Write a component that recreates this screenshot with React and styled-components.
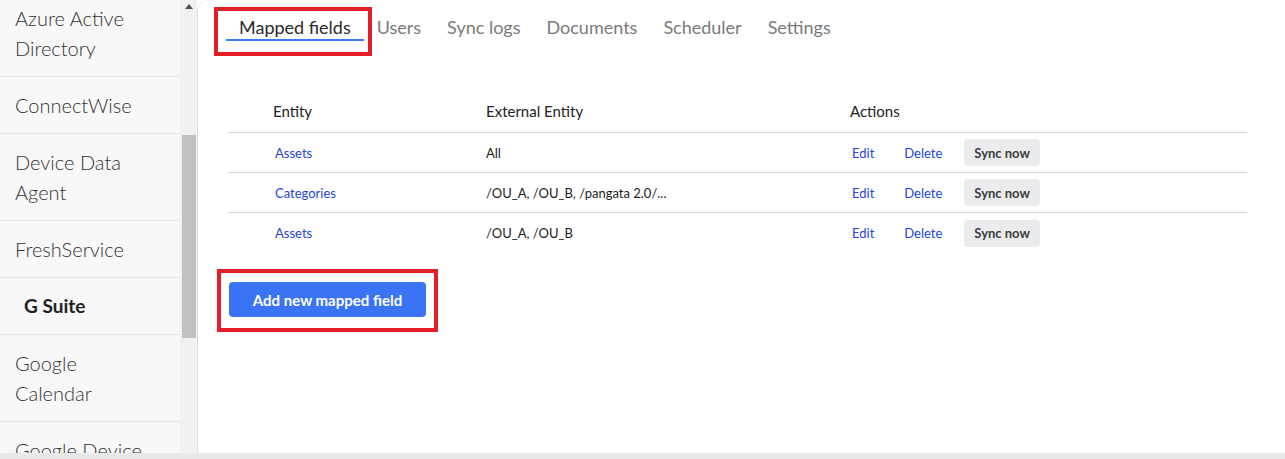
import React from 'react';
import styled, { createGlobalStyle } from 'styled-components';

const GlobalStyle = createGlobalStyle`
  html, body {
    margin: 0;
    padding: 0;
    overflow: hidden;
  }
  body {
    font-family: Lato, "Open Sans", "Liberation Sans", sans-serif;
    color: #222;
  }
  *, *::before, *::after {
    box-sizing: border-box;
  }
`;

const Page = styled.div`
  height: 459px;
  display: flex;
  flex-direction: column;
  overflow: hidden;
`;

const Layout = styled.div`
  height: 453px;
  display: flex;
  flex-shrink: 0;
`;

const Sidebar = styled.aside`
  width: 197px;
  display: flex;
  background-color: #f1f1f1;
  flex-shrink: 0;
`;

const SideList = styled.ul`
  width: 180px;
  margin: -10px 0 0;
  padding: 0;
  list-style: none;
  background-color: #f8f8f8;
  overflow: hidden;
`;

const SideItem = styled.li`
  padding: 13px 8px 13px ${(p) => (p.$active ? '24px' : '15px')};
  font-size: ${(p) => (p.$active ? 19 : 20)}px;
  line-height: 30px;
  font-weight: ${(p) => (p.$active ? 700 : 300)};
  color: ${(p) => (p.$active ? '#222' : '#333')};
  white-space: nowrap;
  border-bottom: 1px solid #e6e6e6;
`;

const ScrollTrack = styled.div`
  width: 16px;
  display: flex;
  flex-direction: column;
  align-items: center;
  margin-left: 1px;
`;

const ScrollArrow = styled.span`
  margin-top: 4px;
  width: 0;
  height: 0;
  border-left: 4px solid transparent;
  border-right: 4px solid transparent;
  border-bottom: 5px solid #505050;
`;

const ScrollThumb = styled.span`
  margin-top: 126px;
  width: 14px;
  height: 203px;
  background-color: #c1c1c1;
`;

const Main = styled.main`
  flex: 1;
  background-color: #fff;
  border-left: 1px solid #dcdcdc;
  border-top-left-radius: 12px;
  padding: 15px 38px 0 30px;
`;

const Tabs = styled.nav`
  display: flex;
  margin-left: -2px;
`;

const Tab = styled.span`
  position: relative;
  padding: 0 13px;
  font-size: 18px;
  line-height: 24px;
  color: ${(p) => (p.$active ? '#2b2b2b' : '#7a7a7a')};
  border-bottom: 2px solid ${(p) => (p.$active ? '#3b7bf2' : 'transparent')};
`;

const Highlight = styled.span`
  position: absolute;
  top: ${(p) => p.$top}px;
  left: ${(p) => p.$left}px;
  right: ${(p) => p.$right}px;
  bottom: ${(p) => p.$bottom}px;
  border: 4px solid #e41e26;
  pointer-events: none;
`;

const Table = styled.div`
  margin-top: 51px;
`;

const Row = styled.div`
  display: grid;
  grid-template-columns: 213px 364px 1fr;
  align-items: center;
  height: ${(p) => (p.$head ? 41 : 40)}px;
  padding-left: 45px;
  padding-bottom: ${(p) => (p.$head ? 3 : 0)}px;
  border-bottom: ${(p) => (p.$last ? 'none' : '1px solid #d8d8d8')};
`;

const HeadCell = styled.span`
  font-size: 15px;
  color: #222;
`;

const EntityLink = styled.a`
  display: block;
  padding-left: 2px;
  font-size: 13px;
  color: #2246d4;
  text-decoration: none;
`;

const Cell = styled.span`
  font-size: 13px;
  color: #1c1c1c;
`;

const Actions = styled.div`
  display: flex;
  align-items: center;
`;

const ActionLink = styled.a`
  margin-left: ${(p) => p.$gap}px;
  font-size: 13px;
  color: #2246d4;
  text-decoration: none;
`;

const SyncButton = styled.button`
  margin-left: 22px;
  height: 27px;
  padding: 0 10px;
  border: none;
  border-radius: 4px;
  background-color: #ebebee;
  color: #3d3d3d;
  font-family: inherit;
  font-size: 13px;
  font-weight: 700;
`;

const AddWrap = styled.div`
  position: relative;
  display: inline-block;
  margin: 29px 0 0 1px;
`;

const AddButton = styled.button`
  display: block;
  width: 197px;
  height: 35px;
  border: none;
  border-radius: 4px;
  background-color: #3a74f5;
  color: #fff;
  font-family: inherit;
  font-size: 15px;
  font-weight: 700;
`;

const Footer = styled.footer`
  flex: 1;
  padding-top: 3px;
  background: linear-gradient(#e9e9e9, #dcdcdc);
  text-align: center;
  font-size: 13px;
  color: #222;
`;

const sideItems = [
  { label: 'Azure Active', second: 'Directory' },
  { label: 'ConnectWise' },
  { label: 'Device Data', second: 'Agent' },
  { label: 'FreshService' },
  { label: 'G Suite', active: true },
  { label: 'Google', second: 'Calendar' },
  { label: 'Google Device', second: 'Management' },
];

const tabs = ['Mapped fields', 'Users', 'Sync logs', 'Documents', 'Scheduler', 'Settings'];

const mappings = [
  { entity: 'Assets', external: 'All' },
  { entity: 'Categories', external: '/OU_A, /OU_B, /pangata 2.0/...' },
  { entity: 'Assets', external: '/OU_A, /OU_B' },
];

function App() {
  return (
    <Page>
      <GlobalStyle />
      <Layout>
        <Sidebar>
          <SideList>
            {sideItems.map((item) => (
              <SideItem key={item.label} $active={item.active}>
                {item.label}
                {item.second && (
                  <>
                    <br />
                    {item.second}
                  </>
                )}
              </SideItem>
            ))}
          </SideList>
          <ScrollTrack>
            <ScrollArrow />
            <ScrollThumb />
          </ScrollTrack>
        </Sidebar>

        <Main>
          <Tabs>
            {tabs.map((tab, i) => (
              <Tab key={tab} $active={i === 0}>
                {tab}
                {i === 0 && <Highlight $top={-8} $left={-12} $right={-8} $bottom={-17} />}
              </Tab>
            ))}
          </Tabs>

          <Table>
            <Row $head>
              <HeadCell>Entity</HeadCell>
              <HeadCell>External Entity</HeadCell>
              <HeadCell>Actions</HeadCell>
            </Row>
            {mappings.map((m, i) => (
              <Row key={i} $last={i === mappings.length - 1}>
                <EntityLink href="#">{m.entity}</EntityLink>
                <Cell>{m.external}</Cell>
                <Actions>
                  <ActionLink href="#" $gap={2}>Edit</ActionLink>
                  <ActionLink href="#" $gap={30}>Delete</ActionLink>
                  <SyncButton>Sync now</SyncButton>
                </Actions>
              </Row>
            ))}
          </Table>

          <AddWrap>
            <AddButton>Add new mapped field</AddButton>
            <Highlight $top={-13} $left={-12} $right={-12} $bottom={-15} />
          </AddWrap>
        </Main>
      </Layout>
      <Footer>Powered by Asset Panda</Footer>
    </Page>
  );
}

export default App;
